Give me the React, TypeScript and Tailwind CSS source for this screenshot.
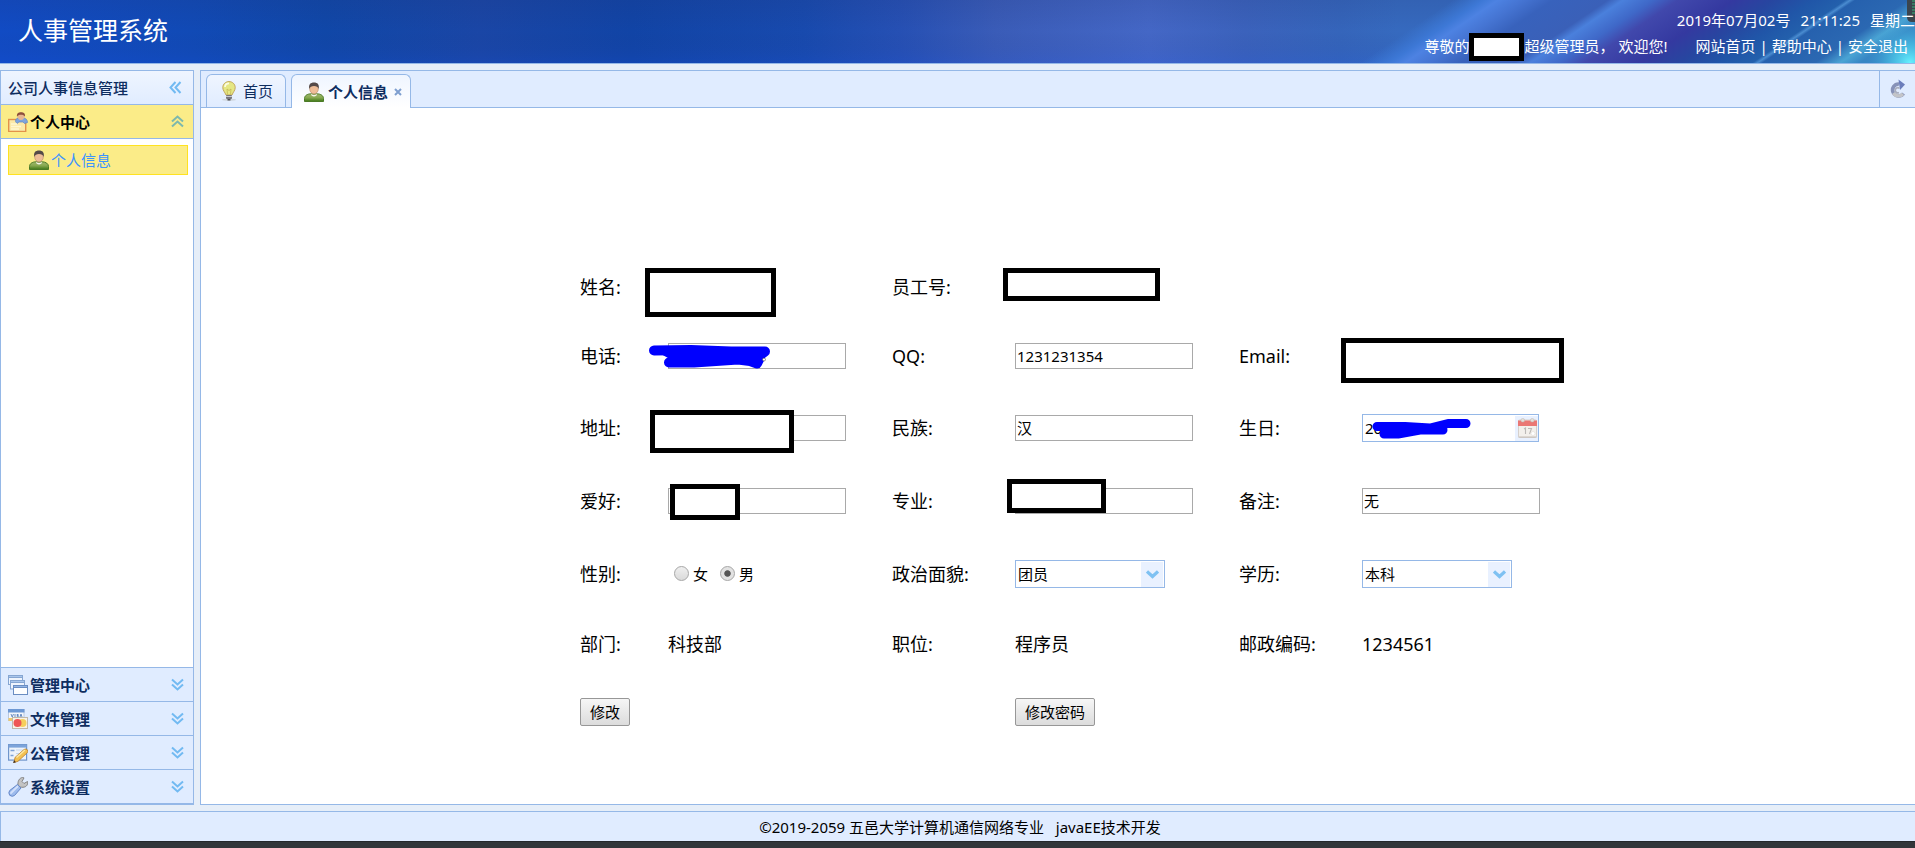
import { useState } from "react";
import type { ReactNode } from "react";
import { clsx } from "clsx";

function HeaderArt() {
  return (
    <div aria-hidden="true" className="absolute inset-0 overflow-hidden">
      <svg className="absolute inset-0 h-full w-full" viewBox="0 0 1915 63" preserveAspectRatio="none">
        <defs>
          <linearGradient id="sky" x1="0" x2="1" y1="0" y2="0">
            <stop offset="0" stopColor="#114bc4" />
            <stop offset="0.1" stopColor="#114ab6" />
            <stop offset="0.17" stopColor="#1047a8" />
            <stop offset="0.25" stopColor="#1a46a6" />
            <stop offset="0.33" stopColor="#1144a6" />
            <stop offset="0.42" stopColor="#184aae" />
            <stop offset="0.47" stopColor="#2650b4" />
            <stop offset="0.52" stopColor="#3a5cb8" />
            <stop offset="0.6" stopColor="#4467c6" />
            <stop offset="0.65" stopColor="#3b62bc" />
            <stop offset="0.7" stopColor="#3565bb" />
            <stop offset="0.73" stopColor="#366abf" />
            <stop offset="1" stopColor="#366abf" />
          </linearGradient>
          <linearGradient id="shade" x1="0" x2="0" y1="0" y2="1">
            <stop offset="0" stopColor="#20306c" stopOpacity="0.14" />
            <stop offset="0.5" stopColor="#20306c" stopOpacity="0" />
            <stop offset="1" stopColor="#1850e8" stopOpacity="0.15" />
          </linearGradient>
        </defs>
        <rect width="1915" height="63" fill="url(#sky)" />
        <rect width="1915" height="63" fill="url(#shade)" />
      </svg>
      <svg className="absolute right-0 top-0 h-full" width="555" viewBox="0 0 555 63" preserveAspectRatio="none">
        <defs>
          <linearGradient id="rays" gradientUnits="userSpaceOnUse" x1="0" y1="63" x2="500" y2="63" gradientTransform="skewX(-56) translate(93 0)">
            <stop offset="0" stopColor="#3a78d4" stopOpacity="0" />
            <stop offset="0.06" stopColor="#3d78d6" />
            <stop offset="0.09" stopColor="#4d82e2" />
            <stop offset="0.14" stopColor="#4574d2" />
            <stop offset="0.2" stopColor="#3862bc" />
            <stop offset="0.31" stopColor="#3a60b8" />
            <stop offset="0.34" stopColor="#4a80dc" />
            <stop offset="0.4" stopColor="#3f68c8" />
            <stop offset="0.45" stopColor="#4148ac" />
            <stop offset="0.56" stopColor="#3439a0" />
            <stop offset="0.64" stopColor="#2746a0" />
            <stop offset="0.72" stopColor="#2056a8" />
            <stop offset="0.785" stopColor="#2360ac" />
            <stop offset="0.795" stopColor="#4a8cd0" />
            <stop offset="0.805" stopColor="#2661ae" />
            <stop offset="0.91" stopColor="#2b68b2" />
            <stop offset="0.96" stopColor="#4aa4d4" />
            <stop offset="1" stopColor="#3786c4" />
          </linearGradient>
          <radialGradient id="glow" gradientUnits="userSpaceOnUse" cx="550" cy="63" r="44">
            <stop offset="0" stopColor="#66f2ff" />
            <stop offset="0.45" stopColor="#4ccdec" stopOpacity="0.6" />
            <stop offset="1" stopColor="#3a94d0" stopOpacity="0" />
          </radialGradient>
        </defs>
        <rect width="555" height="63" fill="url(#rays)" />
        <rect x="490" width="65" height="63" fill="url(#glow)" />
        <path d="M547 0h8v22h-3q-5 0-5-5z" fill="#3b454e" />
        <path d="M552 1h3M552 4h3M552 7h3M552 10h3M552 13h3" stroke="#35b478" strokeWidth="1" />
      </svg>
    </div>
  );
}

function UserIcon() {
  return (
    <svg aria-hidden="true" width="20" height="20" viewBox="0 0 20 20" className="shrink-0">
      <defs>
        <linearGradient id="shirt" x1="0" x2="0" y1="0" y2="1">
          <stop offset="0" stopColor="#9fb86c" />
          <stop offset="0.5" stopColor="#86a850" />
          <stop offset="1" stopColor="#3f7818" />
        </linearGradient>
      </defs>
      <path d="M0.5 19.5v-3c0-3 3-4.500 6-4.700h7c3 .2 6 1.700 6 4.700v3z" fill="url(#shirt)" stroke="#4b7a26" />
      <path d="M7 11.500q3 3 6 0l-.5 2q-2.500 2-5 0z" fill="#f4f4ea" />
      <ellipse cx="10" cy="7" rx="4.300" ry="4.900" fill="#eebd98" stroke="#b98a68" strokeWidth="0.600" />
      <path d="M5.300 7C4.400 2.500 6.500 0.500 10 0.500s5.600 2 4.700 6.500C14 4.600 12.500 3.900 10 3.900S6 4.600 5.300 7z" fill="#554a48" />
    </svg>
  );
}

function BulbIcon() {
  return (
    <svg aria-hidden="true" width="20" height="20" viewBox="0 0 20 20" className="shrink-0">
      <ellipse cx="10" cy="18.700" rx="7" ry="1" fill="#cfd6de" />
      <path d="M10 .6C6.500.6 3.800 3.200 3.800 6.600c0 2.900 2 4.300 3.200 7.400h6c1.200-3.100 3.200-4.500 3.200-7.400C16.200 3.200 13.500.6 10 .6z" fill="#e5e784" stroke="#c2a45c" />
      <path d="M6 6c.2-2.400 2-3.600 4-3.600" stroke="#fbfce0" strokeWidth="1.800" fill="none" />
      <path d="M8.500 13.500L8 8l2 1.500L12 8l-.5 5.500" stroke="#c5b955" strokeWidth="0.800" fill="none" />
      <rect x="7" y="14" width="6" height="4" rx="1" fill="#77777d" />
      <path d="M7 15.500h6" stroke="#c9c9cf" />
      <rect x="8.500" y="18" width="3" height="1.500" fill="#4c4c52" />
    </svg>
  );
}

function CardUserIcon() {
  return (
    <svg aria-hidden="true" width="20" height="20" viewBox="0 0 20 20" className="shrink-0">
      <rect x="0.700" y="7.500" width="17" height="12" fill="#fbe9a8" stroke="#e2924a" strokeWidth="1.400" />
      <path d="M7.500 9.500c0-3 2-4 5.500-4s6.500 1.500 6.500 5l-3 1-1.500-1.500h-4L9 11.500z" fill="#7ea4dc" stroke="#5c86c4" strokeWidth="0.700" />
      <ellipse cx="13" cy="4.300" rx="3.300" ry="3.800" fill="#e8b692" />
      <path d="M9 4.800C8.400 1.300 10.500.2 13 .2s4.600 1.100 4 4.600c-1-1.800-2-2.100-4-2.100s-3 .3-4 2.100z" fill="#8d4f3c" />
      <path d="M3 12h6M3 14.500h10M3 17h8" stroke="#fff7d0" strokeWidth="1.300" />
    </svg>
  );
}

function WindowsIcon() {
  return (
    <svg aria-hidden="true" width="20" height="20" viewBox="0 0 20 20" className="shrink-0" stroke="#86a6d2">
      <rect x="0.500" y="0.500" width="14" height="9" fill="#eef4fd" />
      <rect x="0.500" y="0.500" width="14" height="2" fill="#a9c6ec" />
      <rect x="2.500" y="5.500" width="14" height="8.500" fill="#eef4fd" />
      <rect x="2.500" y="5.500" width="14" height="2" fill="#a9c6ec" />
      <rect x="5.500" y="10.500" width="14" height="9" fill="#fdfeff" stroke="#6a8dc2" />
      <rect x="5.500" y="10.500" width="14" height="2" fill="#93b6e6" stroke="#6a8dc2" />
    </svg>
  );
}

function CardsIcon() {
  return (
    <svg aria-hidden="true" width="20" height="20" viewBox="0 0 20 20" className="shrink-0">
      <rect x="0.500" y="0.500" width="15.500" height="11" fill="#f5f7fb" stroke="#b9c8de" />
      <rect x="0" y="0" width="16.500" height="3.500" fill="#6d98d4" />
      <path d="M3 5l1.200 3L5.500 5M7 5v3M10.500 5.500H9v1h1.300v1.200H8.800M12 8l1-3 1 3" stroke="#5b82bc" strokeWidth="0.900" fill="none" />
      <rect x="0.500" y="9" width="5" height="3" fill="#f0c96c" />
      <rect x="4.500" y="8.500" width="15" height="11" fill="#f9f3e6" stroke="#c0b8aa" />
      <circle cx="14.500" cy="14" r="4" fill="#f6cf5c" />
      <circle cx="9.500" cy="14" r="4" fill="#ee5554" />
    </svg>
  );
}

function EditFormIcon() {
  return (
    <svg aria-hidden="true" width="20" height="20" viewBox="0 0 20 20" className="shrink-0">
      <rect x="0.600" y="1.600" width="18" height="15.500" fill="#eef4fc" stroke="#6f95cb" strokeWidth="1.200" />
      <rect x="0.600" y="1.600" width="18" height="3" fill="#7ca3da" />
      <path d="M2.500 7.500h4M2.500 12.500h3" stroke="#7fa3d6" strokeWidth="1.400" />
      <path d="M8 7h7M8 10.500h5" stroke="#c6d7ee" />
      <path d="M6 19.500l1-5L16 6.500q2-1.200 3.300.2 1.200 1.600-.2 3.200L10 18.300z" fill="#f3c152" stroke="#bb812c" strokeWidth="0.800" />
      <path d="M8.500 14.500L17 7" stroke="#fde9a4" strokeWidth="1.300" />
      <path d="M5 20l1.200-2.800 1.800 2z" fill="#3f3022" />
    </svg>
  );
}

function WrenchIcon() {
  return (
    <svg aria-hidden="true" width="20" height="20" viewBox="0 0 20 20" className="shrink-0">
      <path d="M10 8.500c-.4-4 1-7.500 4.500-8l1.500.4-2 3.600 2 2 3.500-2 .3 1.500c-.4 3.500-3.800 5-7.300 4z" fill="#c3c3c3" stroke="#858585" />
      <path d="M9.500 7.500l3.500 3.500-6.500 7.500q-2.300 1.700-4.800-.2-1.700-2.600 0-4.800z" fill="#9dbbec" stroke="#6688c8" />
      <path d="M9.500 9.500L3 16" stroke="#d2e0fa" strokeWidth="1.800" strokeLinecap="round" />
    </svg>
  );
}

function CalendarIcon() {
  return (
    <svg aria-hidden="true" width="19" height="20" viewBox="0 0 19 20" className="pointer-events-none absolute right-[2px] top-1">
      <rect x="0.500" y="2" width="18" height="17.500" rx="1" fill="#f3f0ec" stroke="#d6d0cb" />
      <path d="M0 2.500h19V8H0z" fill="#ea7774" />
      <rect x="3" y="0.500" width="3.500" height="3.500" rx="1.500" fill="#e4dfda" stroke="#bdb4ae" strokeWidth="0.500" />
      <rect x="12.500" y="0.500" width="3.500" height="3.500" rx="1.500" fill="#e4dfda" stroke="#bdb4ae" strokeWidth="0.500" />
      <path d="M6 11l1.500-1v6M10 10.500h3.500L11.500 16" stroke="#bcb9b7" strokeWidth="1.100" fill="none" />
      <circle cx="15" cy="15.500" r="2" fill="#fff" stroke="#ddd8d4" strokeWidth="0.500" />
      <path d="M0.500 18.500h18v1H.5z" fill="#c4beb9" />
    </svg>
  );
}

function RefreshIcon() {
  return (
    <svg aria-hidden="true" width="16" height="20" viewBox="0 0 16 20">
      <path d="M13.500 14.500A6 6 0 1 1 9 5" stroke="#8792b8" strokeWidth="3.600" fill="none" />
      <path d="M13 15A6 6 0 0 1 3.500 14" stroke="#c3c4c8" strokeWidth="3.400" fill="none" />
      <path d="M8.500 0.500L15 5.500 10 11z" fill="#6b7dbb" />
      <path d="M9 13.500a2.500 2.500 0 1 1 .5-4" stroke="#a9adbc" strokeWidth="1.600" fill="none" />
    </svg>
  );
}

function Chevrons({ kind }: { kind: "left" | "up" | "down" }) {
  const paths = {
    left: "M6.500 1L1.500 6.500l5 5.500M11.500 1l-5 5.500 5 5.500",
    up: "M1 6.500l5.500-5 5.500 5M1 11.500l5.500-5 5.500 5",
    down: "M1 1.500l5.500 5 5.500-5M1 6.500l5.500 5 5.500-5",
  };
  return (
    <svg aria-hidden="true" width="13" height="13" viewBox="0 0 13 13" fill="none" strokeWidth="2" stroke={kind === "up" ? "#7db8ad" : "#72baf2"}>
      <path d={paths[kind]} />
    </svg>
  );
}

const sections: { name: string; icon: ReactNode }[] = [
  { name: "管理中心", icon: <WindowsIcon /> },
  { name: "文件管理", icon: <CardsIcon /> },
  { name: "公告管理", icon: <EditFormIcon /> },
  { name: "系统设置", icon: <WrenchIcon /> },
];

function Mask({ className }: { className: string }) {
  return <span aria-hidden="true" className={clsx("absolute z-10 border-[5px] border-black bg-white", className)} />;
}

function Sidebar() {
  return (
    <aside className="flex w-[194px] shrink-0 flex-col border border-[#95b8e7] bg-white font-medium text-[#0e2d5f]">
      <div className="flex h-[34px] items-center justify-between border-b border-[#95b8e7] bg-linear-to-b from-[#eff5ff] to-[#e0ecff] pl-[7px] pr-[11px]">
        <span>公司人事信息管理</span>
        <button type="button" aria-label="收起侧栏">
          <Chevrons kind="left" />
        </button>
      </div>
      <button type="button" className="flex h-[34px] items-center justify-between border-b border-[#95b8e7] bg-[#fbec88] pl-[7px] pr-[9px] font-bold text-black">
        <span className="flex items-center gap-[2px]">
          <CardUserIcon />
          个人中心
        </span>
        <Chevrons kind="up" />
      </button>
      <div className="flex-1 pl-[7px] pr-[5px] pt-[6px]">
        <a href="#profile" className="flex h-[30px] items-center gap-[2px] border border-[#ffe221] bg-[#fbec88] pl-5 font-normal text-[#3d94ff]">
          <UserIcon />
          个人信息
        </a>
      </div>
      <div className="border-b border-[#95b8e7]">
        {sections.map((s) => (
          <button key={s.name} type="button" className="flex h-[34px] w-full items-center justify-between border-t border-[#95b8e7] bg-[#e0ecff] pl-[7px] pr-[9px] font-bold">
            <span className="flex items-center gap-[2px]">
              {s.icon}
              {s.name}
            </span>
            <Chevrons kind="down" />
          </button>
        ))}
      </div>
    </aside>
  );
}

const label = "whitespace-nowrap text-lg leading-6";
const box = "block h-[26px] w-[178px] border border-[#a9a9a9] bg-white px-px text-[15px] outline-none";

function TextField({ id, name, value, children }: { id: string; name: string; value: string; children?: ReactNode }) {
  return (
    <>
      <label htmlFor={id} className={label}>
        {name}:
      </label>
      <div className="relative">
        <input id={id} defaultValue={value} className={box} />
        {children}
      </div>
    </>
  );
}

function Combo({ id, name, options }: { id: string; name: string; options: string[] }) {
  return (
    <>
      <label htmlFor={id} className={label}>
        {name}:
      </label>
      <div className="relative w-[150px]">
        <select id={id} className="block h-7 w-full appearance-none border border-[#95b8e7] bg-white pl-[2px] pr-6 text-[15px] outline-none">
          {options.map((o) => (
            <option key={o}>{o}</option>
          ))}
        </select>
        <span aria-hidden="true" className="pointer-events-none absolute bottom-px right-[2px] top-[2px] flex w-[22px] items-center justify-center bg-[#e9f1ff]">
          <svg width="13" height="9" viewBox="0 0 13 9" fill="none" stroke="#7ec1f2" strokeWidth="3.200">
            <path d="M1 1.500l5.500 5 5.500-5" />
          </svg>
        </span>
      </div>
    </>
  );
}

const radio =
  "size-[15px] appearance-none rounded-full border border-[#a6a6a6] bg-linear-to-b from-[#efefef] to-[#dadada] checked:bg-radial checked:from-[#555] checked:from-30% checked:to-[#e2e2e2] checked:to-40%";
const btn = "h-7 rounded-xs border border-[#979797] bg-linear-to-b from-[#f6f6f6] to-[#dcdcdc] px-[9px] text-[15px] leading-6";
const row = "grid grid-cols-[88px_224px_123px_224px_123px_178px] items-center";

function ProfileForm() {
  return (
    <form className="mx-auto w-[960px]" onSubmit={(e) => e.preventDefault()}>
      <div className={clsx(row, "h-[68px]")}>
        <span className={label}>姓名:</span>
        <div className="relative h-6">
          <Mask className="-left-[23px] -top-[7px] h-[49px] w-[131px]" />
        </div>
        <span className={label}>员工号:</span>
        <div className="relative h-6">
          <Mask className="-left-3 -top-[7px] h-[33px] w-[157px]" />
        </div>
      </div>
      <div className={clsx(row, "h-[70px]")}>
        <TextField id="phone" name="电话" value="">
          <svg aria-hidden="true" width="124" height="26" viewBox="0 0 124 26" className="absolute -left-[19px] top-[2px]">
            <path d="M5 5.500L42 5l40 1.500h34L106 14M20 17.500h25l44-3 12 1.500 7 2.500 3-6" fill="none" stroke="#0000fe" strokeWidth="10" strokeLinecap="round" strokeLinejoin="round" />
            <path d="M10 8l80-2 10 8-70 5z" fill="#0000fe" />
            <circle cx="115" cy="14.500" r="1.500" fill="#fff" stroke="#333" strokeWidth="0.500" />
          </svg>
        </TextField>
        <TextField id="qq" name="QQ" value="1231231354" />
        <TextField id="email" name="Email" value="">
          <Mask className="-left-[21px] -top-[5px] h-[45px] w-[223px]" />
        </TextField>
      </div>
      <div className={clsx(row, "h-[73px]")}>
        <TextField id="address" name="地址" value="">
          <Mask className="-left-[18px] -top-[5px] h-[43px] w-[144px]" />
        </TextField>
        <TextField id="nation" name="民族" value="汉" />
        <label htmlFor="birthday" className={label}>
          生日:
        </label>
        <div className="relative w-[177px]">
          <input id="birthday" defaultValue="20" className="block h-7 w-full border border-[#95b8e7] bg-white pl-[2px] text-[15px] outline-none" />
          <span aria-hidden="true" className="pointer-events-none absolute bottom-px right-px top-[2px] w-[23px] bg-[#e9f1ff]" />
          <CalendarIcon />
          <svg aria-hidden="true" width="100" height="24" viewBox="0 0 100 24" className="absolute left-[10px] top-1">
            <path d="M5 8.500h28l25 1.500 18-4.500h18M12 16h14l22-4h23" fill="none" stroke="#0000fe" strokeWidth="9" strokeLinecap="round" strokeLinejoin="round" />
          </svg>
        </div>
      </div>
      <div className={clsx(row, "h-[73px]")}>
        <TextField id="hobby" name="爱好" value="">
          <Mask className="-top-1 left-[2px] h-9 w-[70px]" />
        </TextField>
        <TextField id="major" name="专业" value="">
          <Mask className="-left-2 -top-[9px] h-[34px] w-[99px]" />
        </TextField>
        <TextField id="remark" name="备注" value="无" />
      </div>
      <div className={clsx(row, "h-[73px]")}>
        <span className={label}>性别:</span>
        <div className="flex items-center gap-3 pl-[6px] text-[15px]">
          <label className="flex items-center gap-1">
            <input type="radio" name="gender" className={radio} />女
          </label>
          <label className="flex items-center gap-1">
            <input type="radio" name="gender" defaultChecked className={radio} />男
          </label>
        </div>
        <Combo id="politics" name="政治面貌" options={["团员", "党员", "群众"]} />
        <Combo id="degree" name="学历" options={["本科", "硕士", "博士"]} />
      </div>
      <div className={clsx(row, "h-[68px]")}>
        <span className={label}>部门:</span>
        <span className={label}>科技部</span>
        <span className={label}>职位:</span>
        <span className={label}>程序员</span>
        <span className={label}>邮政编码:</span>
        <span className={label}>1234561</span>
      </div>
      <div className={clsx(row, "h-[68px]")}>
        <div>
          <button type="submit" className={btn}>修改</button>
        </div>
        <div className="col-start-4">
          <button type="button" className={btn}>修改密码</button>
        </div>
      </div>
    </form>
  );
}

export default function App() {
  const [tab, setTab] = useState("profile");
  return (
    <div className="flex min-h-screen flex-col overflow-hidden bg-[#e6eef8] font-['Noto_Sans','Noto_Sans_CJK_SC',sans-serif] text-[15px] leading-5 text-black">
      <header className="relative flex h-16 items-center justify-between border-b border-[#95b8e7] text-white">
        <HeaderArt />
        <h1 className="relative pb-1 pl-[18px] text-[25px] leading-8">人事管理系统</h1>
        <div className="relative flex flex-col items-end gap-[6px] whitespace-nowrap pt-[2px]">
          <time className="flex gap-[10px]">
            <span>2019年07月02号</span>
            <span>21:11:25</span>
            <span>星期二</span>
          </time>
          <div className="flex pr-[7px]">
            <span>尊敬的</span>
            <span className="relative w-[55px]">
              <Mask className="-top-[3px] left-0 h-7 w-[55px]" />
            </span>
            <span>超级管理员， 欢迎您!</span>
            <nav className="ml-7 flex gap-1">
              <a href="#home">网站首页</a>|<a href="#help">帮助中心</a>|<a href="#exit">安全退出</a>
            </nav>
          </div>
        </div>
      </header>

      <div className="flex flex-1 gap-[6px] py-[6px]">
        <Sidebar />
        <main className="flex min-w-0 flex-1 flex-col border border-r-0 border-[#95b8e7] bg-white">
          <div className="flex h-[37px] items-end bg-[#e0ecff]">
            <div role="tablist" className="flex h-full flex-1 items-end gap-[5px] border-b border-[#95b8e7] pl-[5px]">
              <button
                type="button"
                role="tab"
                aria-selected={tab === "home"}
                onClick={() => setTab("home")}
                className="flex h-[33px] w-20 items-center justify-center gap-1 rounded-t-md border border-b-0 border-[#95b8e7] bg-linear-to-b from-[#eff5ff] to-[#e0ecff] text-[#0e2d5f]"
              >
                <BulbIcon />
                首页
              </button>
              <div className="-mb-px flex h-[34px] w-[120px] items-center rounded-t-md border border-b-0 border-[#95b8e7] bg-linear-to-b from-[#eff5ff] to-white pl-3">
                <button
                  type="button"
                  role="tab"
                  aria-selected={tab === "profile"}
                  onClick={() => setTab("profile")}
                  className="flex items-center gap-1 whitespace-nowrap font-bold text-[#0e2d5f]"
                >
                  <UserIcon />
                  个人信息
                </button>
                <button type="button" aria-label="关闭" className="ml-[6px]">
                  <svg width="8" height="8" viewBox="0 0 8 8" stroke="#7f9fd0" strokeWidth="2">
                    <path d="M1 1l6 6M7 1L1 7" />
                  </svg>
                </button>
              </div>
            </div>
            <button type="button" aria-label="刷新" className="flex h-full w-9 items-center justify-center border-b border-l border-[#95b8e7]">
              <RefreshIcon />
            </button>
          </div>
          <div className="flex-1 pl-1 pt-[145px]">
            <ProfileForm />
          </div>
        </main>
      </div>

      <footer className="flex h-[30px] items-center justify-center border-l border-t border-[#95b8e7] bg-[#e0ecff] pl-1 pt-px">
        <p className="whitespace-pre">©2019-2059 五邑大学计算机通信网络专业   javaEE技术开发</p>
      </footer>
      <div className="h-[7px] border-t border-[#24282c] bg-[#32363a]" />
    </div>
  );
}
